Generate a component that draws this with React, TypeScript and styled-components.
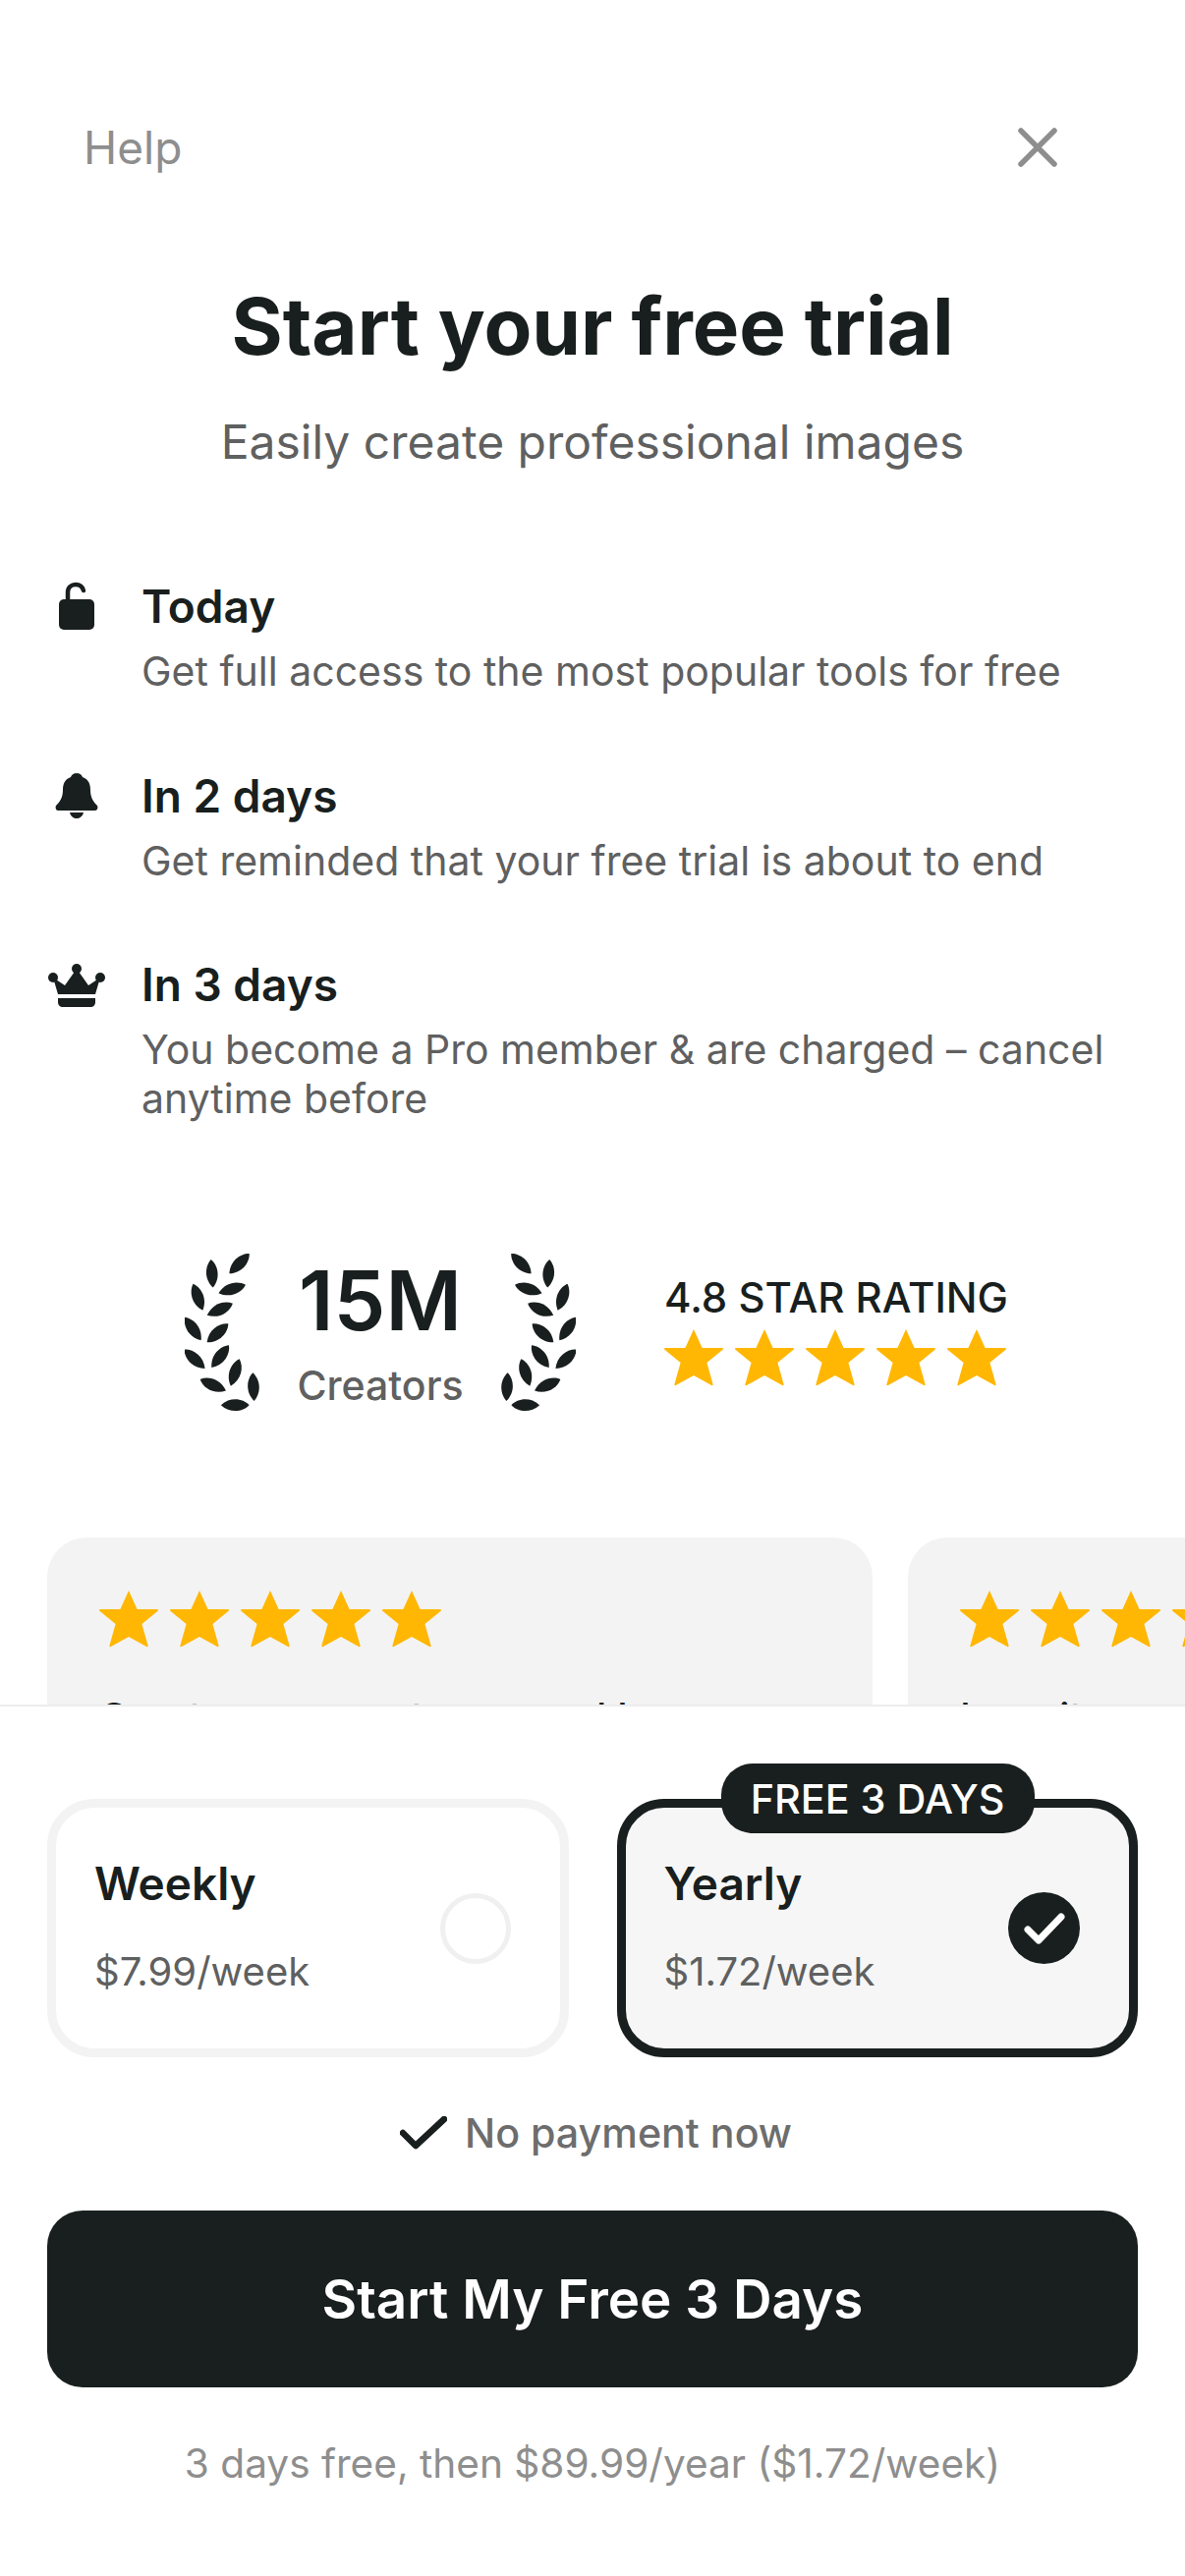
import React from 'react';
import styled, { createGlobalStyle } from 'styled-components';

const INK = '#191f1e';
const GOLD = '#ffb703';

const GlobalStyle = createGlobalStyle`
  html, body {
    margin: 0;
    padding: 0;
    background: #fff;
  }
  body {
    font-family: Inter, "Liberation Sans", sans-serif;
    color: ${INK};
  }
  * {
    box-sizing: border-box;
  }
`;

const Screen = styled.div`
  width: 1206px;
  height: 2622px;
  display: flex;
  flex-direction: column;
  overflow: hidden;
  background: #fff;
`;

const Scroller = styled.div`
  height: 1735px;
  flex: none;
  overflow: hidden;
  padding-top: 122px;
`;

const TopBar = styled.div`
  display: flex;
  justify-content: space-between;
  align-items: center;
  height: 56px;
  padding: 0 130px 0 85px;
`;

const HelpLink = styled.span`
  font-size: 46px;
  color: #8e8e8e;
`;

const Title = styled.h1`
  margin: 106px 0 0;
  text-align: center;
  font-size: 79.8px;
  line-height: 96px;
  font-weight: 700;
`;

const Subtitle = styled.p`
  margin: 40px 0 0;
  text-align: center;
  font-size: 48px;
  line-height: 60px;
  color: #5f6060;
`;

const Timeline = styled.div`
  margin-top: 109px;
  display: flex;
  flex-direction: column;
  gap: 73.5px;
  padding: 0 48px;
`;

const Step = styled.div`
  display: flex;
  align-items: flex-start;
`;

const StepIcon = styled.div`
  width: 96px;
  flex: none;
`;

const StepTitle = styled.div`
  font-size: 46px;
  line-height: 56px;
  font-weight: 600;
`;

const StepText = styled.div`
  margin-top: 13px;
  font-size: 41px;
  line-height: 50px;
  color: #5f6060;
`;

const Proof = styled.div`
  margin-top: 133px;
  display: flex;
  align-items: center;
  padding-left: 188px;
`;

const Creators = styled.div`
  width: 246px;
  flex: none;
  display: flex;
  flex-direction: column;
  align-items: center;
`;

const CreatorsCount = styled.div`
  font-size: 84px;
  line-height: 96px;
  font-weight: 600;
`;

const CreatorsLabel = styled.div`
  margin-top: 12px;
  font-size: 41px;
  line-height: 52px;
  font-weight: 500;
  color: #5f6060;
`;

const Rating = styled.div`
  margin: -4px 0 0 90px;
  display: flex;
  flex-direction: column;
  gap: 6px;
`;

const RatingLabel = styled.div`
  font-size: 42px;
  line-height: 50px;
  font-weight: 500;
`;

const Stars = styled.div`
  display: flex;
  gap: 12px;
  svg {
    width: 60px;
    height: 60px;
    display: block;
  }
`;

const Reviews = styled.div`
  margin-top: 129px;
  display: flex;
  gap: 36px;
  padding-left: 48px;
`;

const ReviewCard = styled.div`
  width: 840px;
  height: 420px;
  flex: none;
  background: #f3f3f3;
  border-radius: 40px;
  padding: 53px 53px;
`;

const ReviewText = styled.div`
  margin-top: 45px;
  font-size: 40px;
  line-height: 50px;
  font-weight: 500;
`;

const Sheet = styled.div`
  flex: 1;
  border-top: 2px solid #ededed;
  padding: 94px 48px 0;
  display: flex;
  flex-direction: column;
  background: #fff;
`;

const Plans = styled.div`
  display: flex;
  gap: 49px;
`;

const PlanCard = styled.div<{ $selected?: boolean }>`
  position: relative;
  flex: 1;
  height: 263px;
  border: 9px solid ${(p) => (p.$selected ? INK : '#f3f3f3')};
  border-radius: 48px;
  background: ${(p) => (p.$selected ? '#f6f6f6' : '#fff')};
  padding: 0 39px;
  display: flex;
  justify-content: space-between;
  align-items: center;
`;

const PlanInfo = styled.div`
  padding-bottom: 4px;
`;

const PlanName = styled.div`
  font-size: 46px;
  line-height: 56px;
  font-weight: 600;
`;

const PlanPrice = styled.div`
  margin-top: 37px;
  font-size: 40px;
  line-height: 50px;
  color: #5f6060;
`;

const Badge = styled.div`
  position: absolute;
  top: -45px;
  left: 97px;
  width: 319px;
  height: 71px;
  border-radius: 32px;
  background: ${INK};
  color: #fff;
  font-size: 41.3px;
  font-weight: 500;
  display: flex;
  align-items: center;
  justify-content: center;
`;

const EmptyRadio = styled.div`
  width: 72px;
  height: 72px;
  margin-right: 11px;
  border: 5px solid #f0f0f0;
  border-radius: 50%;
`;

const CheckedRadio = styled.div`
  width: 73px;
  height: 73px;
  margin-right: 11px;
  border-radius: 50%;
  background: ${INK};
  display: flex;
  align-items: center;
  justify-content: center;
`;

const Reassure = styled.div`
  margin-top: 51px;
  padding-left: 7px;
  display: flex;
  justify-content: center;
  align-items: center;
  gap: 18px;
  font-size: 41.2px;
  line-height: 52px;
  font-weight: 500;
  color: #6d6d6d;
`;

const StartButton = styled.button`
  margin-top: 53px;
  height: 180px;
  border: none;
  border-radius: 36px;
  background: ${INK};
  color: #fff;
  font-family: inherit;
  font-size: 54.8px;
  font-weight: 600;
`;

const Terms = styled.div`
  margin-top: 53px;
  text-align: center;
  font-size: 40.6px;
  line-height: 50px;
  color: #8e8e8e;
`;

const Star = () => (
  <svg viewBox="0 0 60 60">
    <path
      fill={GOLD}
      d="M30 1l8.6 19H59a1 1 0 0 1 .6 1.8L43.4 35 49.600 57a1 1 0 0 1-1.500 1.100L30 48 11.900 58.100a1 1 0 0 1-1.500-1.100l6.200-22L.4 21.800A1 1 0 0 1 1 20h20.400z"
    />
  </svg>
);

const FiveStars = () => (
  <Stars>
    {[0, 1, 2, 3, 4].map((i) => (
      <Star key={i} />
    ))}
  </Stars>
);

// x, y, rotation of each leaf, read off the reference
const LEAVES = [
  [221, 75, 45],
  [138, 105, -4],
  [199, 152, 73],
  [95, 177, -20],
  [162, 214, 65],
  [80, 273, -35],
  [155, 286, 49],
  [85, 365, -47],
  [163, 357, 38],
  [208, 406, 18],
  [141, 444, -66],
  [264, 450, -3],
  [208, 505, 90],
];

const FlippedSvg = styled.svg<{ $flip?: boolean }>`
  flex: none;
  transform: ${(p) => (p.$flip ? 'scaleX(-1)' : 'none')};
`;

const Laurel = ({ flip }: { flip?: boolean }) => (
  <FlippedSvg $flip={flip} width="76" height="160" viewBox="55 45 227 477">
    {LEAVES.map(([x, y, r], i) => (
      <path
        key={i}
        fill={INK}
        transform={`translate(${x} ${y}) rotate(${r})`}
        d="M0-43C20-24 26 14 0 43C-26 14-20-24 0-43z"
      />
    ))}
  </FlippedSvg>
);

export default function App() {
  return (
    <Screen>
      <GlobalStyle />
      <Scroller>
        <TopBar>
          <HelpLink>Help</HelpLink>
          <svg width="40" height="40" viewBox="0 0 40 40">
            <path d="M3 3l34 34M37 3L3 37" stroke="#8e8e8e" strokeWidth="5.500" strokeLinecap="round" />
          </svg>
        </TopBar>
        <Title>Start your free trial</Title>
        <Subtitle>Easily create professional images</Subtitle>
        <Timeline>
          <Step>
            <StepIcon>
              <svg width="60" height="60" viewBox="0 0 60 60">
                <path d="M21 24v-10c0-5 3.500-8 8-8s7 2.500 8 6" fill="none" stroke={INK} strokeWidth="4.500" strokeLinecap="round" />
                <rect x="12" y="21" width="36" height="31" rx="5" fill={INK} />
              </svg>
            </StepIcon>
            <div>
              <StepTitle>Today</StepTitle>
              <StepText>Get full access to the most popular tools for free</StepText>
            </div>
          </Step>
          <Step>
            <StepIcon>
              <svg width="60" height="60" viewBox="0 0 60 60">
                <path
                  fill={INK}
                  d="M30 5c3 0 5 1.500 6 4 6 2 8 7 8 13 0 8 3 12 7 16 1 2 0 5-2 5H11c-2 0-3-3-2-5 4-4 7-8 7-16 0-6 2-11 8-13 1-2.500 3-4 6-4zM23 45h14c-1 4-4 6-7 6s-6-2-7-6z"
                />
              </svg>
            </StepIcon>
            <div>
              <StepTitle>In 2 days</StepTitle>
              <StepText>Get reminded that your free trial is about to end</StepText>
            </div>
          </Step>
          <Step>
            <StepIcon>
              <svg width="60" height="60" viewBox="0 0 60 60">
                <g fill={INK}>
                  <circle cx="30" cy="12" r="5" />
                  <circle cx="6" cy="21" r="5" />
                  <circle cx="54" cy="21" r="5" />
                  <path d="M6 21l12 8 12-17 12 17 12-8-5 17H11z" />
                  <path d="M11 42h38v4c0 3-2 5-5 5H16c-3 0-5-2-5-5z" />
                </g>
              </svg>
            </StepIcon>
            <div>
              <StepTitle>In 3 days</StepTitle>
              <StepText>You become a Pro member &amp; are charged – cancel anytime before</StepText>
            </div>
          </Step>
        </Timeline>
        <Proof>
          <Laurel />
          <Creators>
            <CreatorsCount>15M</CreatorsCount>
            <CreatorsLabel>Creators</CreatorsLabel>
          </Creators>
          <Laurel flip />
          <Rating>
            <RatingLabel>4.8 STAR RATING</RatingLabel>
            <FiveStars />
          </Rating>
        </Proof>
        <Reviews>
          <ReviewCard>
            <FiveStars />
            <ReviewText>Great resources to use and I am sure</ReviewText>
          </ReviewCard>
          <ReviewCard>
            <FiveStars />
            <ReviewText>I use it on every</ReviewText>
          </ReviewCard>
        </Reviews>
      </Scroller>
      <Sheet>
        <Plans>
          <PlanCard>
            <PlanInfo>
              <PlanName>Weekly</PlanName>
              <PlanPrice>$7.99/week</PlanPrice>
            </PlanInfo>
            <EmptyRadio />
          </PlanCard>
          <PlanCard $selected>
            <Badge>FREE 3 DAYS</Badge>
            <PlanInfo>
              <PlanName>Yearly</PlanName>
              <PlanPrice>$1.72/week</PlanPrice>
            </PlanInfo>
            <CheckedRadio>
              <svg width="42" height="32" viewBox="0 0 42 32">
                <path d="M4 17l11 11L38 4" fill="none" stroke="#fff" strokeWidth="7" strokeLinecap="round" strokeLinejoin="round" />
              </svg>
            </CheckedRadio>
          </PlanCard>
        </Plans>
        <Reassure>
          <svg width="48" height="34" viewBox="0 0 48 34">
            <path d="M3 17l13 13L45 3" fill="none" stroke={INK} strokeWidth="6.500" strokeLinecap="round" strokeLinejoin="round" />
          </svg>
          No payment now
        </Reassure>
        <StartButton>Start My Free 3 Days</StartButton>
        <Terms>3 days free, then $89.99/year ($1.72/week)</Terms>
      </Sheet>
    </Screen>
  );
}
